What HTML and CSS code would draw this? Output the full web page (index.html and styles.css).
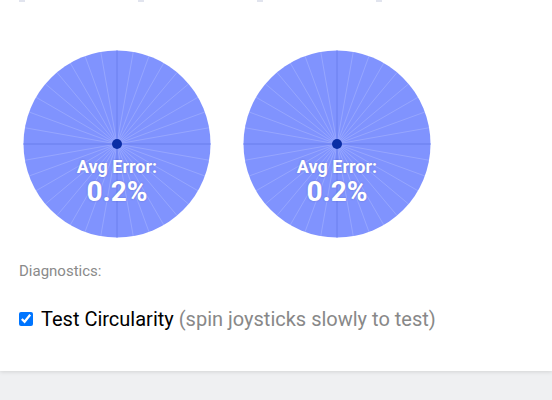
FILE: index.html
```html
<!DOCTYPE html>
<html>
<head>
<meta charset="utf-8">
<link rel="stylesheet" href="styles.css">
</head>
<body>
<div class="card">
  <div class="ticks">
    <span class="tick"></span><span class="tick"></span><span class="tick"></span><span class="tick"></span>
  </div>
  <div class="dials">
    <div class="dial">
      <svg class="dial-svg" viewBox="-94 -94 188 188" width="188" height="188">
        <circle r="93.5" fill="#8093fe"/>
        <g class="spokes"></g>
        <line x1="-93.5" y1="0" x2="93.5" y2="0" class="axis"/>
        <line x1="0" y1="-93.5" x2="0" y2="93.5" class="axis"/>
        <circle r="5" fill="#0a2ea6"/>
      </svg>
      <div class="label"><div class="l1">Avg Error:</div><div class="l2">0.2%</div></div>
    </div>
    <div class="dial">
      <svg class="dial-svg" viewBox="-94 -94 188 188" width="188" height="188">
        <circle r="93.5" fill="#8093fe"/>
        <g class="spokes"></g>
        <line x1="-93.5" y1="0" x2="93.5" y2="0" class="axis"/>
        <line x1="0" y1="-93.5" x2="0" y2="93.5" class="axis"/>
        <circle r="5" fill="#0a2ea6"/>
      </svg>
      <div class="label"><div class="l1">Avg Error:</div><div class="l2">0.2%</div></div>
    </div>
  </div>
  <div class="diag">Diagnostics:</div>
  <label class="check">
    <input type="checkbox" checked>
    <span class="text"><span class="main">Test Circularity</span> <span class="hint">(spin joysticks slowly to test)</span></span>
  </label>
</div>
<script src="script.js"></script>
</body>
</html>
```

FILE: script.js
```js
document.querySelectorAll('.spokes').forEach(function (g) {
  var ns = 'http://www.w3.org/2000/svg';
  for (var a = 0; a < 180; a += 10) {
    if (a % 90 === 0) continue;
    var r = a * Math.PI / 180;
    var x = Math.cos(r) * 93.5, y = Math.sin(r) * 93.5;
    var l = document.createElementNS(ns, 'line');
    l.setAttribute('x1', -x); l.setAttribute('y1', -y);
    l.setAttribute('x2', x); l.setAttribute('y2', y);
    g.appendChild(l);
  }
});
```

FILE: styles.css
```css
html, body {
  margin: 0;
  padding: 0;
}
body {
  background: #eff0f2;
  font-family: Roboto, "Liberation Sans", sans-serif;
  width: 552px;
  height: 400px;
  overflow: hidden;
}
.card {
  background: #fff;
  height: 371px;
  box-shadow: 0 1px 4px rgba(0, 0, 0, 0.12);
  padding: 0 0 0 19px;
  box-sizing: border-box;
}
.ticks {
  display: flex;
  gap: 113px;
  height: 2px;
}
.tick {
  width: 6px;
  height: 2px;
  background: #e1e4ee;
}
.dials {
  display: flex;
  gap: 32px;
  margin: 48px 0 0 4px;
}
.dial {
  position: relative;
  width: 188px;
  height: 188px;
}
.dial-svg {
  display: block;
}
.spokes line {
  stroke: rgba(255, 255, 255, 0.22);
  stroke-width: 0.8;
}
.axis {
  stroke: #7084f2;
  stroke-width: 1.3;
}
.label {
  position: absolute;
  left: 0;
  right: 0;
  top: 106px;
  text-align: center;
  color: #fff;
  font-weight: 700;
  text-shadow: 0 0 2px rgba(40, 50, 120, 0.35);
}
.l1 {
  font-size: 18px;
  line-height: 21px;
}
.l2 {
  font-size: 28px;
  line-height: 29px;
}
.diag {
  margin-top: 24px;
  font-size: 15px;
  color: #8a8a8a;
  line-height: 18px;
}
.check {
  display: flex;
  align-items: center;
  margin-top: 27px;
  font-size: 20px;
  line-height: 24px;
}
.check input {
  width: 14px;
  height: 14px;
  margin: 0 8px 0 0;
}
.main {
  color: #000;
}
.hint {
  color: #888;
}
```
